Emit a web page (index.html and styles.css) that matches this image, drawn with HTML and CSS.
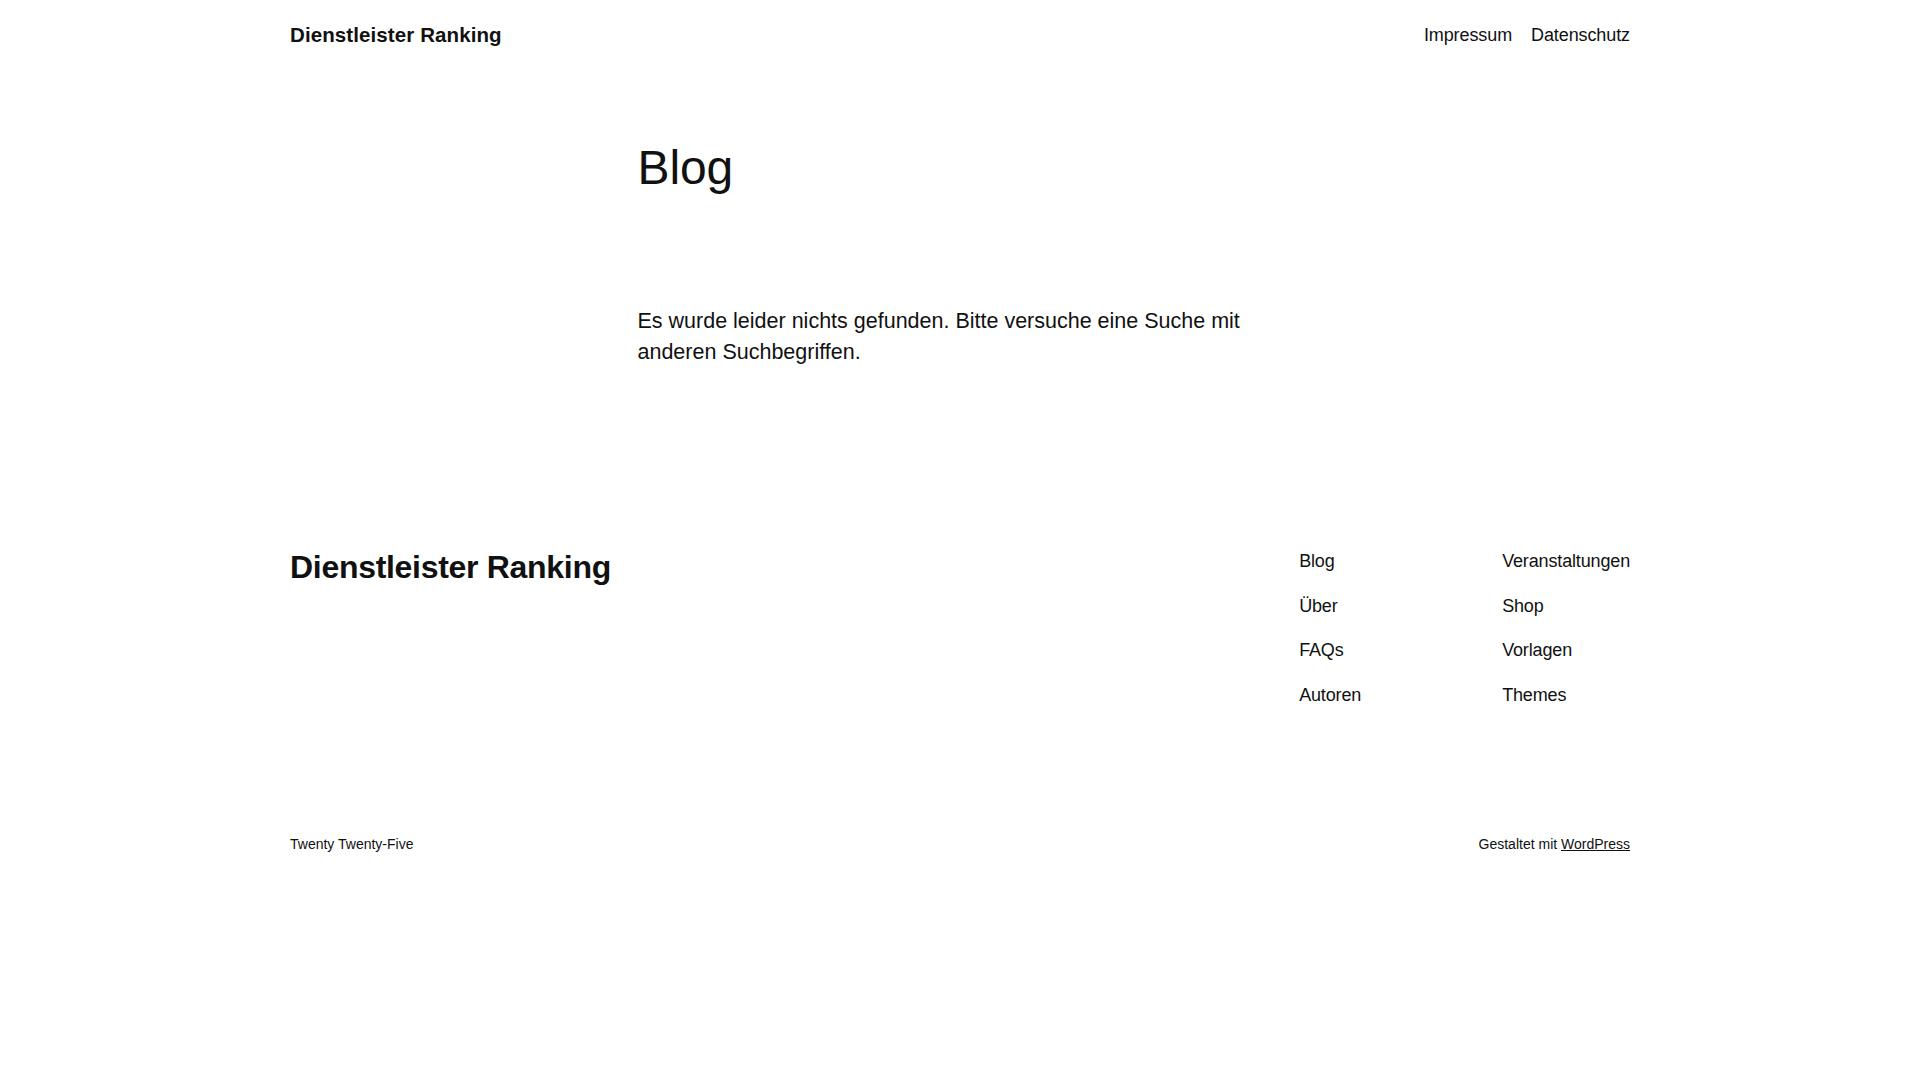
FILE: index.html
```html
<!DOCTYPE html>
<html lang="de">
<head>
<meta charset="utf-8">
<title>Blog – Dienstleister Ranking</title>
<link rel="stylesheet" href="styles.css">
</head>
<body>
<header class="site-header">
  <div class="wide header-row">
    <a class="site-title" href="#">Dienstleister Ranking</a>
    <nav class="header-nav">
      <a href="#">Impressum</a>
      <a href="#">Datenschutz</a>
    </nav>
  </div>
</header>
<main class="site-main">
  <div class="content">
    <h1 class="page-title">Blog</h1>
    <p class="no-results">Es wurde leider nichts gefunden. Bitte versuche eine Suche mit anderen Suchbegriffen.</p>
  </div>
</main>
<footer class="site-footer">
  <div class="wide footer-top">
    <a class="footer-title" href="#">Dienstleister Ranking</a>
    <div class="footer-navs">
      <nav class="footer-col">
        <a href="#">Blog</a>
        <a href="#">Über</a>
        <a href="#">FAQs</a>
        <a href="#">Autoren</a>
      </nav>
      <nav class="footer-col">
        <a href="#">Veranstaltungen</a>
        <a href="#">Shop</a>
        <a href="#">Vorlagen</a>
        <a href="#">Themes</a>
      </nav>
    </div>
  </div>
  <div class="wide footer-bottom">
    <span>Twenty Twenty-Five</span>
    <span>Gestaltet mit <a class="wp-link" href="#">WordPress</a></span>
  </div>
</footer>
</body>
</html>
```

FILE: styles.css
```css
html, body {
  margin: 0;
  padding: 0;
  background: #ffffff;
}

body {
  font-family: "Liberation Sans", Arial, sans-serif;
  color: #111111;
  font-size: 22px;
  line-height: 1.4;
}

a {
  color: #111111;
  text-decoration: none;
}

.wide {
  width: 1340px;
  margin: 0 auto;
}

.site-header {
  padding: 21px 0 19px;
}

.header-row {
  display: flex;
  justify-content: space-between;
  align-items: center;
}

.site-title {
  font-size: 20.5px;
  line-height: 28px;
  font-weight: 700;
  letter-spacing: 0.1px;
}

.header-nav {
  display: flex;
  gap: 19px;
  font-size: 18px;
  line-height: 28px;
  letter-spacing: -0.1px;
}

.site-main {
  padding-top: 73px;
}

.content {
  width: 645px;
  margin: 0 auto;
}

.page-title {
  margin: 0;
  font-size: 48px;
  line-height: 1.125;
  font-weight: 400;
  letter-spacing: -0.1px;
}

.no-results {
  margin: 111px 0 0;
  font-size: 21.5px;
  line-height: 31px;
  letter-spacing: 0;
}

.site-footer {
  padding-top: 181.2px;
}

.footer-top {
  display: flex;
  justify-content: space-between;
  align-items: flex-start;
}

.footer-title {
  font-size: 32px;
  line-height: 1.125;
  font-weight: 700;
  letter-spacing: -0.3px;
}

.footer-navs {
  display: flex;
  gap: 141px;
}

.footer-col {
  display: flex;
  flex-direction: column;
  gap: 19.3px;
  font-size: 18px;
  line-height: 1.4;
  letter-spacing: -0.15px;
}

.footer-bottom {
  display: flex;
  justify-content: space-between;
  margin-top: 127.3px;
  font-size: 14px;
  line-height: 1.4;
}

.wp-link {
  text-decoration: underline;
}
```
